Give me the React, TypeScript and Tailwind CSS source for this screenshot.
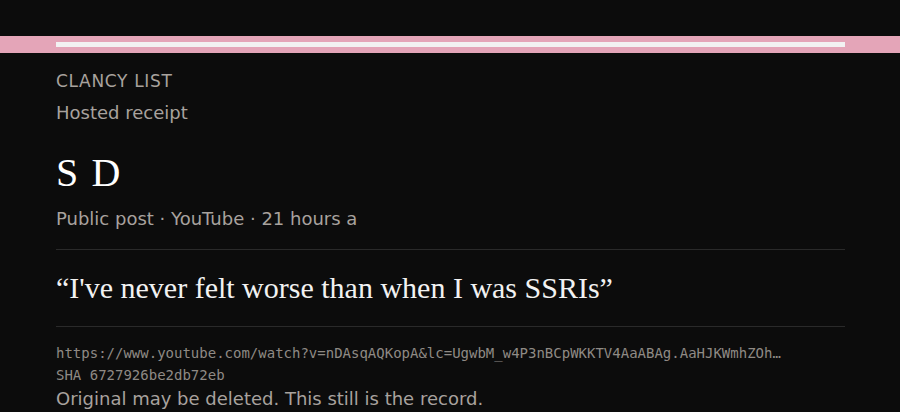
export default function App() {
  return (
    <div className="min-h-[412px] bg-[#0c0c0c] text-[#a8a29e] font-['DejaVu_Sans',sans-serif] overflow-hidden">
      <div className="h-9" />
      <div className="bg-[#e4a5b8] pl-14 pr-[55px] py-[6px]">
        <div className="h-[5px] bg-[#f2f2f2]" />
      </div>
      <main className="pl-14 pr-[55px] pt-4">
        <div className="text-[17px] leading-6 tracking-[0.04em]">CLANCY LIST</div>
        <div className="text-[18px] leading-6 mt-2">Hosted receipt</div>
        <h1 className="mt-[24px] text-[40px] leading-[48px] text-white font-['Liberation_Serif',serif] tracking-[0.04em]">
          S D
        </h1>
        <div className="mt-[10px] text-[18px] leading-6">Public post · YouTube · 21 hours a</div>
        <div className="mt-[18px] border-t border-[#2a2a2a]" />
        <p className="py-[20px] text-[30px] leading-[36px] text-[#f2f2f2] font-['Liberation_Serif',serif]">
          “I've never felt worse than when I was SSRIs”
        </p>
        <div className="border-t border-[#2a2a2a]" />
        <div className="mt-[15px] font-['DejaVu_Sans_Mono',monospace] text-[14px] leading-[22px] text-[#8f8a85]">
          <div className="truncate">
            https://www.youtube.com/watch?v=nDAsqAQKopA&amp;lc=UgwbM_w4P3nBCpWKKTV4AaABAg.AaHJKWmhZOh…
          </div>
          <div>SHA 6727926be2db72eb</div>
        </div>
        <div className="text-[18px] leading-6 mt-[1px]">Original may be deleted. This still is the record.</div>
      </main>
    </div>
  );
}
